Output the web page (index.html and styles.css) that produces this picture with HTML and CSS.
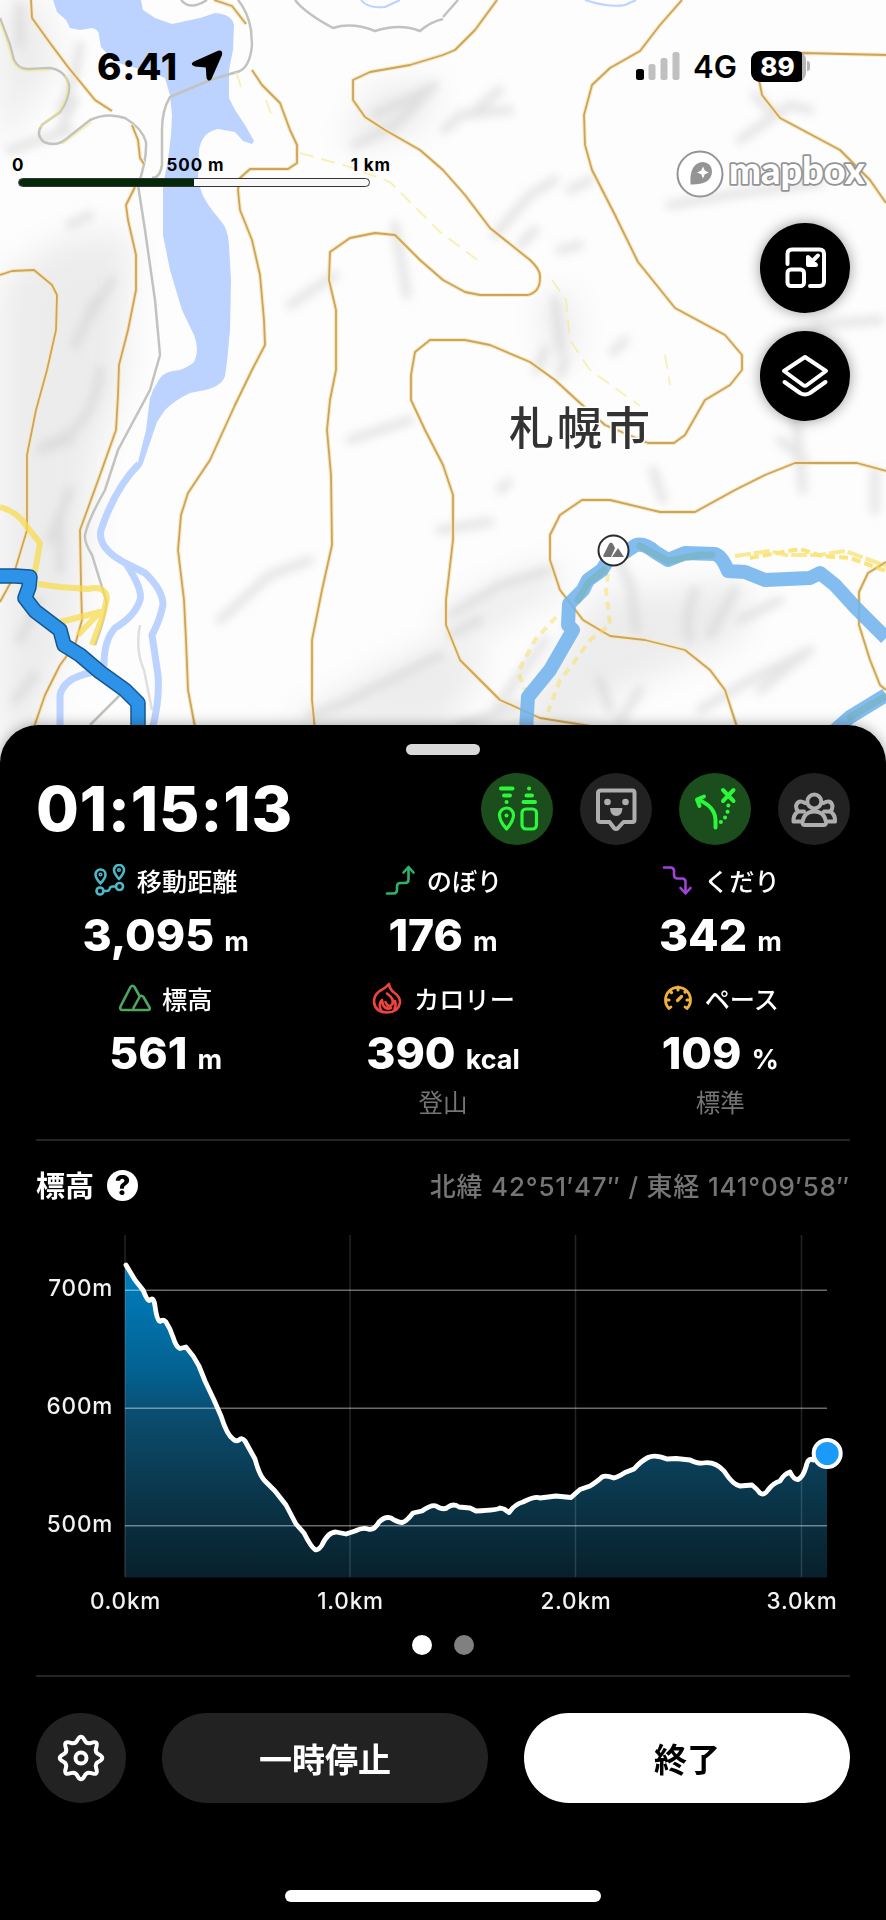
FILE: index.html
```html
<!DOCTYPE html>
<html lang="ja">
<head>
  <meta charset="UTF-8">
  <meta name="viewport" content="width=device-width, initial-scale=1.0">
  <title>活動記録</title>
  <link rel="stylesheet" href="styles.css">
</head>
<body>
  <div class="app">
    <div class="map">
      <svg class="map-canvas" viewBox="0 0 886 800">
        <defs>
          <filter id="soft" x="-20%" y="-20%" width="140%" height="140%"><feGaussianBlur stdDeviation="5"/></filter>
          <filter id="wide" x="-20%" y="-20%" width="140%" height="140%"><feGaussianBlur stdDeviation="16"/></filter>
        </defs>
        <rect width="886" height="800" fill="#fdfdfd"/>

        <!-- 陰影 -->
        <g filter="url(#wide)" fill="#ececec">
          <path d="M0 0H40L60 60 0 150Z"/>
          <path d="M0 280L60 240 130 230 125 380 95 460 80 620 30 740H0Z"/>
          <path d="M370 90L440 80 420 130 340 150Z"/>
          <path d="M540 300l30-10 10 60-30 20Z"/>
          <path d="M600 590l60 0 90-10-10 60-120 50-60 50-50-10Z"/>
          <path d="M443 610l110-50 10 30-110 60Z"/>
          <path d="M280 725l150-80 60 10-40 70Z"/>
        </g>
        <g filter="url(#soft)" fill="none" stroke="#d0d0d0" stroke-width="9" stroke-linecap="round" opacity=".55">
          <path d="M80 45q-5 40-20 65M70 130l-60 20M20 5v40M75 100l-15 30"/>
          <path d="M112 280l-30 50M100 370q-5 60-55 75M70 490l-20 50M95 300l-20 45M40 450l30-10M60 520v50M20 640l20-40M15 700l20-25"/>
          <path d="M355 145l40-20 40-40M375 115l60-30M395 225l12 70M290 305l45-30M70 225l20-10"/>
          <path d="M445 130l15-15 50-5M495 235l35-40 25-15M520 245l15-15M570 190l20-10M670 205l70-12 80-10M560 250l20-5"/>
          <path d="M555 300l6 50M545 350l-8 20M560 375l5-15M625 340l-12 12M653 470l10 30M795 410l8 80M780 440l25 20M875 470v40"/>
          <path d="M740 140l50-35 20 5M755 95l15 15M815 325l65-5M500 90l-30 25"/>
          <path d="M450 615l50-30 50-15M450 635l30-15M340 705l50-25 50-25M310 715l30-10M220 620l50-45 40-15M440 530l50-8M350 440l60-20M500 490l8-8"/>
          <path d="M630 580l6 50M695 590q-12 30-5 50M735 590l-25 45M780 600l-40 20M620 560l6 20"/>
          <path d="M600 680l10 30M640 690l-20 30M700 710l50-30 60-30M545 640l-50 70M460 725l60-20M760 690l50-40"/>
        </g>

        <!-- 水域 -->
        <path fill="#bcd2ff" d="M53 0L57 12 66 20 70 28 80 30 92 28Q99 29 99 36L101 47 115 62 150 72 165 78 170 95 172 115 171 135 168 160 163 185V235L170 270 182 310 194 335Q200 350 194 362 190 366 180 370 165 371 160 378L153 390 150 398 146 430 138 462 136 468 142 466 157 422 165 410Q175 400 190 393L205 390Q222 386 225 376L227 362 230 330 231 280 229 245Q228 228 220 220L212 210Q200 195 198 178L199 150Q202 132 218 129L235 132 243 141 252 144 254 141 245 125 235 110 229 98V70L233 50 234 25Q232 14 215 13L200 18 172 24 155 18 143 10 141 0Z"/>
        <g fill="none" stroke="#bcd2ff" stroke-width="7" stroke-linejoin="round">
          <path d="M139 464Q115 488 101 530 97 548 125 563L145 573Q163 590 163 605 160 620 152 635L158 675Q160 700 152 730" />
          <path d="M127 565Q143 590 140 600 135 616 115 628 104 640 104 665L90 673Q64 678 60 695V730"/>
          <path d="M361 0Q368 9 385 7L400 0M585 0Q610 8 625 5L636 0" stroke-width="2"/>
        </g>

        <!-- 道路 -->
        <g class="road">
          <path d="M0 18L10 45 14 60Q18 69 28 69L50 68Q65 70 69 85 70 98 60 112L42 125Q35 135 44 142 58 148 70 136L90 120Q107 112 125 118 142 128 146 142 147 160 138 185L145 230 155 300 160 355 150 390 118 450 105 490Q88 520 85 535 84 542 92 555L106 600Q108 610 95 645"/>
          <path d="M238 0Q248 12 251 30L252 45Q250 66 240 71L210 80 170 97Q162 110 162 130V165Q160 178 152 178"/>
          <path d="M181 0Q190 11 207 0M295 0Q305 13 333 28 352 22 375 31 400 23 420 31 430 22 443 19M443 17L458 0"/>
          <path d="M120 695L90 725"/>
          <path d="M140 625q-5 25 4 45l8 40" opacity=".5"/>
        </g>
        <g fill="none" stroke="#f4e98e" stroke-width="2" opacity=".6">
          <path d="M0 22L8 45 12 60Q18 71 28 71L50 70M65 76q7 14-6 36L40 127M62 144L92 122"/>
          <path d="M236 72l5 15M266 100l5 14" />
          <path d="M300 153l50 14 40 15 50 50 40 30M552 280l14 20 4 40 20 30 50 36M665 355l5 30" stroke-dasharray="14 8"/>
        </g>

        <!-- 等高線 -->
        <g class="contour contour-halo">
          <path id="c1" d="M31 0L32 18 50 43 68 67 95 100 112 111M132 125L138 140 140 158 144 164M135 187L126 205 128 220 136 255V290L128 330 119 365 118 395 116 430 100 475 80 530 81 585 82 620 75 645 60 665 45 695 33 730"/>
          <path id="c2" d="M0 275L12 271 34 270 52 285 57 295 56 330 47 370 36 410 27 455V530L18 560 12 580 0 602M214 0L232 6 246 24"/>
          <path id="c3" d="M252 70L262 85 280 103 290 130 297 145V163L288 169H250L240 178 238 190 240 210 252 240 260 275 264 320 265 345 252 370 235 405 210 460 188 493 181 515 178 550 184 600 186 640 188 690 194 722 196 730"/>
          <path id="c4" d="M497 0L475 30 455 50 443 55 410 65 370 72 353 80V100L365 117 385 130 420 150 443 170 465 195 490 228 530 260Q541 270 540 278 540 292 528 295H480L465 292 443 280 420 260 395 235 375 233 350 238 330 252 329 280 336 310V370L330 400 327 430 331 475 332 545 322 590 312 640V700L315 730"/>
          <path id="c5" d="M682 0L660 25 640 51 610 68 592 85 584 115 585 145 592 170 615 215 638 262 675 308 725 335 742 355V370L730 385 705 400 685 435 674 443H648L605 425 580 403 555 380 530 362 490 345 465 340H430L415 352 411 375V400L425 430 443 465 453 495V540L446 600V625L460 660 500 700 540 718 590 726"/>
          <path id="c6" d="M886 55L803 53 762 58 758 75 762 95 780 118 840 150 870 180 886 203M886 471L857 463H795L765 475 735 490 695 512H660L610 500H582L560 515 550 535V560L560 590 583 620 610 636 645 640 685 650 710 670 725 690 738 730"/>
          <path id="c7" d="M886 562L868 573 859 592V625L870 660 880 685 886 690"/>
        </g>
        <g class="contour">
          <use href="#c1"/><use href="#c2"/><use href="#c3"/><use href="#c4"/><use href="#c5"/><use href="#c6"/><use href="#c7"/>
        </g>

        <!-- みんなの軌跡 -->
        <g fill="none" stroke="#f7dc50" stroke-width="6" opacity=".75" stroke-linejoin="round">
          <path d="M0 507Q18 512 27 527L40 543 35 572M38 584L60 587 88 589Q105 585 107 598L103 615 92 645M60 622L100 612 78 635"/>
          <path d="M735 556L770 551 786 555 820 555 845 551 886 566" stroke-width="4" stroke-dasharray="16 3" opacity=".8"/>
          <path d="M750 558L800 549 822 556 850 558 886 571" stroke-width="4" stroke-dasharray="9 4"/>
          <path d="M610 560L606 590 610 625 590 640 572 665 560 680 548 712M556 617L535 640 518 672 525 690" stroke-width="4" stroke-dasharray="8 6" opacity=".6"/>
        </g>

        <!-- 予定ルート -->
        <g class="plan">
          <path d="M613 560L636 545Q645 543 655 552L668 560 685 553 715 554Q722 556 728 571L745 572 765 580 810 578 820 573 835 585 855 607 886 638"/>
          <path d="M608 560L602 570 588 580 583 590 569 604 568 625 573 630 550 670 528 697 526 730"/>
          <path d="M833 732L850 717 886 695"/>
        </g>
        <path d="M640 546L668 561 700 555 712 555M604 570L588 583 578 600M850 717L886 696" fill="none" stroke="#6aa88e" stroke-width="7" opacity=".35" stroke-linecap="round"/>

        <!-- 歩いた軌跡 -->
        <path class="track-edge" d="M-5 576L15 576 30 577 29 587 25 598 35 611 60 630 64 645 80 655 100 672 125 690 138 703V740"/>
        <path class="track" d="M-5 576L15 576 30 577 29 587 25 598 35 611 60 630 64 645 80 655 100 672 125 690 138 703V740"/>

        <g>
          <circle cx="613.500" cy="550.500" r="15" fill="#fff" stroke="#2b2b2b" stroke-width="2"/>
          <path d="M603 556L609 544Q611 541 613 544L615 548 611 557H604ZM612 557L618 548 624 557Z" fill="#707070"/>
        </g>
        <text class="city" x="509" y="445" textLength="141">札幌市</text>
      </svg>

      <div class="status">
        <span class="clock">6:41</span>
        <svg class="locate" width="32" height="32" viewBox="0 0 32 32"><path d="M3 11.500L27 .8Q32-.5 31 5L20.500 29Q17.500 33 15.500 28L14.800 17.500 4 16.500Q-2 14.500 3 11.500Z"/></svg>
        <svg class="signal" width="45" height="30" viewBox="0 0 45 30">
          <rect x="0" y="18" width="8" height="11" rx="2.500"/>
          <g fill="#c0c0c0"><rect x="12.500" y="13" width="7" height="16" rx="2.500"/><rect x="24.500" y="7" width="7" height="22" rx="2.500"/><rect x="36.500" y="1" width="7" height="28" rx="2.500"/></g>
        </svg>
        <span class="net">4G</span>
        <span class="battery"><span class="level">89</span><span class="nub"></span></span>
      </div>

      <div class="scale">
        <div class="scale-labels"><span>0</span><span>500 m</span><span>1 km</span></div>
        <div class="scale-bar"><div class="scale-fill"></div></div>
      </div>

      <svg class="mapbox" width="200" height="50" viewBox="0 0 200 50">
        <circle cx="25" cy="25" r="22.500" fill="#fff" stroke="#949494" stroke-width="2"/>
        <path d="M15.500 35.500Q14 14 28 13 37 14 37 23 36 36 15.500 35.500Z" fill="#949494"/>
        <path d="M28 17.500l1.800 4 4.200 1.900-4.200 1.900L28 29.500l-1.800-4.200-4.200-1.900 4.200-1.900Z" fill="#fff"/>
        <text x="54" y="34.500" textLength="136" lengthAdjust="spacingAndGlyphs">mapbox</text>
      </svg>

      <div class="map-buttons">
        <button class="map-btn">
          <svg width="90" height="90" viewBox="0 0 90 90">
            <path d="M27.500 41V31q0-4.500 4.500-4.500H59.500q4.500 0 4.500 4.500V58.500q0 4.500-4.500 4.500H50"/>
            <rect x="27.500" y="46.500" width="16.500" height="16.500" rx="3.500"/>
            <path d="M58 32.500L49 41.500M48 34V42H56Z"/>
          </svg>
        </button>
        <button class="map-btn">
          <svg width="90" height="90" viewBox="0 0 90 90">
            <path d="M45 26L66 40 47 54Q45 55.500 43 54L24 40Z"/>
            <path d="M24.500 51L40 62Q45 65 50 62L65.500 51"/>
          </svg>
        </button>
      </div>
    </div>

    <div class="panel">
      <div class="handle"></div>

      <div class="head">
        <div class="timer">01:15:13</div>
        <div class="tools">
          <div class="tool on">
            <svg width="72" height="72" viewBox="0 0 72 72">
              <path d="M20 15.500H31.500M23 22.500H29M25.500 29h.1M48 15.500h.1M45.500 22.500H51M42.500 29H54"/>
              <path d="M25.500 56Q18.500 48 18.500 42A7 7 0 0 1 32.500 42Q32.500 48 25.500 56Z" stroke-width="3.200"/>
              <rect x="41" y="36" width="14.500" height="20" rx="4" stroke-width="3.200"/>
              <circle cx="25.500" cy="42.500" r="2" class="solid"/>
            </svg>
          </div>
          <div class="tool">
            <svg width="72" height="72" viewBox="0 0 72 72">
              <path d="M21 17.500H52.500Q54.500 17.500 54.500 20V46.500Q54.500 49 52.500 49H43.500L38 55Q36 57 34 55L29.500 49H21Q18 49 18 46.500V20Q18 17.500 21 17.500Z"/>
              <circle cx="27.500" cy="29" r="3.300" class="solid"/><circle cx="45.500" cy="29" r="3.300" class="solid"/>
              <path d="M30 35H42.500Q42 43 36.300 43 30.500 43 30 35Z" class="solid"/>
            </svg>
          </div>
          <div class="tool on">
            <svg width="72" height="72" viewBox="0 0 72 72">
              <path d="M36.500 54.500V47Q36 33 18.500 26.500M25 23.500L18 26.500 20.500 33M44 17L54.500 28M54.500 17L44 28"/>
              <path d="M41.800 49h.1M46 44.500h.1M48.500 38.800h.1M49.300 32.500h.1"/>
            </svg>
          </div>
          <div class="tool">
            <svg width="72" height="72" viewBox="0 0 72 72">
              <circle cx="36.300" cy="28.500" r="7"/>
              <path d="M27 30Q20 26 18 33 18 36 20 38.500 15 42 15.500 48.500H22.500M45.500 30Q53 26 54.500 33 54.500 36 52.500 38.500 57.500 42 57 48.500H50"/>
              <path d="M26.500 52H46Q48.500 52 48 48.500 46 38.500 36.300 38.500 26.500 38.500 24.500 48.500 24 52 26.500 52Z"/>
              <path d="M20.500 38.500H26M52 38.500H46"/>
            </svg>
          </div>
        </div>
      </div>

      <div class="stats">
        <div class="stat">
          <div class="label">
            <svg class="icon cyan" viewBox="0 0 32 32"><path d="M6.500 19.500Q1.500 14 1.500 10.500A5 5 0 0 1 11.500 10.500Q11.500 14 6.500 19.500ZM25 15Q20 9.500 20 6A5 5 0 0 1 30 6Q30 9.500 25 15Z"/><circle cx="6.500" cy="10.500" r=".8"/><circle cx="25" cy="6" r=".8"/><circle cx="6" cy="27" r="3.500"/><circle cx="25.500" cy="22.500" r="3.500"/><path d="M9.500 27H12.500Q15 27 15.500 25 16 22.500 19 22.500H22"/></svg>
            移動距離
          </div>
          <div class="value">3,095<span>m</span></div>
        </div>
        <div class="stat">
          <div class="label">
            <svg class="icon green" viewBox="0 0 32 32"><path d="M3 29.500H9.500Q13 29.500 13 26V22.500Q13 19 16.500 19H21Q24.500 19 24.500 15.500V3.500M19.500 8.500L24.500 3 29.500 8.500"/></svg>
            のぼり
          </div>
          <div class="value">176<span>m</span></div>
        </div>
        <div class="stat">
          <div class="label">
            <svg class="icon purple" viewBox="0 0 32 32"><path d="M3 3.500H9.500Q13 3.500 13 7V11Q13 14.500 16.500 14.500H21Q24.500 14.500 24.500 18V29M19.500 24L24.500 29.500 29.500 24"/></svg>
            くだり
          </div>
          <div class="value">342<span>m</span></div>
        </div>
        <div class="stat">
          <div class="label">
            <svg class="icon leaf" viewBox="0 0 32 32"><path d="M3.500 28H29Q31.500 28 30.500 25.500L24.500 15Q22.500 12.500 20.500 15L14.500 26M20.500 14L15.500 5Q13.500 2.500 11.500 5L1.500 24.500Q.500 28 3.500 28"/></svg>
            標高
          </div>
          <div class="value">561<span>m</span></div>
        </div>
        <div class="stat">
          <div class="label">
            <svg class="icon red" viewBox="0 0 32 32"><path d="M18 2Q18.500 7 23 10.500 29.500 15 29 21 27 30.500 16 30.500 4 30 3 20 3 13.500 8 9.500 14 6.500 18 2Z"/><path d="M16 11.500Q23.500 17 21.500 22 18.500 26 15.500 22L14.500 20M10 28Q7 22 11 18L12 23Q15 28 20 26M23.500 27Q25.500 23.500 24 19"/></svg>
            カロリー
          </div>
          <div class="value">390<span>kcal</span></div>
          <div class="sub">登山</div>
        </div>
        <div class="stat">
          <div class="label">
            <svg class="icon amber" viewBox="0 0 32 32"><path d="M7 26.500A12.500 12.500 0 1 1 25 26.500M7 26.500L9 25M25 26.500L23 25" stroke-width="2.800"/><path d="M16 5V8M8 9L9.500 10.500M24 9L23 10M4.500 18H7M27.500 18H25M15.500 18.500L19.500 14.500" stroke-width="3.200"/></svg>
            ペース
          </div>
          <div class="value">109<span>%</span></div>
          <div class="sub">標準</div>
        </div>
      </div>

      <div class="chart-head">
        <h2>標高</h2>
        <span class="help">?</span>
        <span class="coords">北緯 42°51′47″ / 東経 141°09′58″</span>
      </div>

      <svg class="chart" width="814" height="400" viewBox="36 1225 814 400">
        <defs>
          <linearGradient id="fill" x1="0" y1="1264" x2="0" y2="1577" gradientUnits="userSpaceOnUse">
            <stop offset="0" stop-color="#0080c2"/>
            <stop offset=".35" stop-color="#03618f"/>
            <stop offset=".5" stop-color="#0b4b6c"/>
            <stop offset=".75" stop-color="#0a3549"/>
            <stop offset="1" stop-color="#08202c"/>
          </linearGradient>
        </defs>
        <path fill="url(#fill)" d="M125 1264L135 1280 144 1291 149 1300 153 1299 158 1321 164 1320 170 1330 177 1347 186 1347 196 1361 205 1382 215 1402 222 1418 230 1434 237 1440 242 1439 253 1457 262 1477 275 1492 287 1506 296 1524 303 1532 311 1546 316 1550 321 1546 328 1535 336 1532 346 1534 364 1527 372 1529 380 1521 388 1517 402 1522 413 1512 422 1511 433 1505 443 1509 455 1505 476 1511 499 1508 509 1512 519 1503 536 1497 555 1496 571 1497 580 1489 590 1486 605 1476 614 1478 625 1472 635 1467 645 1459 655 1456 667 1459 690 1460 713 1464 722 1470 730 1480 739 1486 752 1485 763 1494 774 1483 780 1481 789 1472 796 1479 803 1473 809 1459 827 1453V1577.500H125Z"/>
        <g class="grid-x"><path d="M125 1235V1577M350 1235V1577M575.500 1235V1577M801.500 1235V1577"/></g>
        <g class="grid-y"><path d="M125 1290.300H827M125 1408.200H827M125 1525.700H827"/></g>
        <path class="line" d="M126 1265L135 1280 143 1290Q147 1300 149 1300.500L152 1299Q154 1299 155 1306 157 1321 160 1321.500 163 1319 166 1322 170 1328 173 1337 176 1347 180 1348.500L186 1347Q194 1356 199 1366L205 1381 214 1400 221 1416Q227 1435 233 1439 236 1442 239 1440 242 1437 245 1441L255 1459Q259 1474 264 1480L275 1491 286 1505 296 1524 304 1533Q311 1547 315 1549.500 318 1551 322 1545 328 1532 336 1532L346 1534 355 1531Q363 1527 368 1529 374 1531 379 1522 385 1516 391 1518 397 1522 402 1522.500 406 1522 413 1513L422 1511Q432 1504 436 1506 444 1511 448 1507 454 1503 459 1507L470 1508 476 1511Q498 1510 500 1508L504 1509 509 1512.500Q515 1504 523 1502 535 1496 540 1498L556 1496 571 1497.500Q576 1493 580 1489.500L590 1486Q598 1481 602 1477 606 1475 614 1478 618 1477 625 1472.500L634 1469Q641 1461 648 1457.500 655 1454 667 1459L676 1458.500 690 1460Q698 1464 703 1463 715 1461 724 1471 733 1485 740 1486L752 1485Q757 1489 760 1493 764 1496 768 1490 773 1483 780 1481 784 1474 790 1472 794 1480 798 1479.500 803 1477 806 1467 808 1457 813 1460L827 1453"/>
        <circle cx="827.200" cy="1453.500" r="13.500" fill="#1a9bfa" stroke="#fff" stroke-width="4"/>
        <g class="axis" text-anchor="end">
          <text x="113" y="1295.500">700m</text><text x="113" y="1413.500">600m</text><text x="113" y="1531.500">500m</text>
        </g>
        <g class="axis" text-anchor="middle">
          <text x="125.500" y="1609">0.0km</text><text x="350.500" y="1609">1.0km</text><text x="576" y="1609">2.0km</text><text x="802" y="1609">3.0km</text>
        </g>
      </svg>

      <div class="dots"><span class="dot active"></span><span class="dot"></span></div>

      <div class="actions">
        <button class="settings">
          <svg width="48" height="48" viewBox="-24 -24 48 48">
            <path d="M-3.500-18Q0-24.500 3.500-18 5.500-13.500 10.250-15.200 17.700-17.700 15.200-10.250 13.500-5.500 18-3.500 24.500 0 18 3.500 13.500 5.500 15.200 10.250 17.700 17.700 10.250 15.200 5.500 13.500 3.500 18 0 24.500-3.500 18-5.500 13.500-10.250 15.200-17.700 17.700-15.200 10.250-13.500 5.500-18 3.500-24.500 0-18-3.500-13.500-5.500-15.200-10.250-17.700-17.700-10.250-15.200-5.500-13.500-3.500-18Z"/>
            <circle r="5.500"/>
          </svg>
        </button>
        <button class="pause">一時停止</button>
        <button class="finish">終了</button>
      </div>

      <div class="home"></div>
    </div>
  </div>
</body>
</html>
```
FILE: styles.css
```css
*{
  box-sizing: border-box;
}
body{
  margin: 0;
  background: #000;
  font-family: Inter, "Noto Sans CJK JP", sans-serif;
  color: #fff;
}
button{
  border: none;
  padding: 0;
  font-family: inherit;
}
.app{
  width: 886px;
  height: 1920px;
  overflow: hidden;
}

/* 地図 */
.map{
  position: relative;
  height: 725px;
}
.map-canvas{
  position: absolute;
  left: 0;
  top: 0;
  width: 886px;
  height: 800px;
}
.contour{
  fill: none;
  stroke: #cda45c;
  stroke-width: 1.8;
  stroke-linejoin: round;
}
.contour-halo{
  stroke: #f7e8c0;
  stroke-width: 4;
}
.road path{
  fill: none;
  stroke: #c2c2be;
  stroke-width: 2.5;
}
.plan path{
  fill: none;
  stroke: #72b4ee;
  stroke-width: 14;
  stroke-linejoin: round;
  opacity: .88;
}
.track-edge{
  fill: none;
  stroke: #17578f;
  stroke-width: 15.500;
  stroke-linejoin: round;
}
.track{
  fill: none;
  stroke: #2d93e8;
  stroke-width: 12.500;
  stroke-linejoin: round;
}
.city{
  font-family: "Noto Sans CJK JP", sans-serif;
  font-size: 45px;
  font-weight: 500;
  fill: #333;
  stroke: #fff;
  stroke-width: 3;
  paint-order: stroke;
}

/* ステータスバー */
.status{
  position: absolute;
  left: 0;
  right: 0;
  top: 46px;
  height: 40px;
  padding: 0 76px 0 97px;
  display: flex;
  align-items: center;
  color: #000;
}
.clock{
  width: 94px;
  font-size: 37px;
  font-weight: 800;
  letter-spacing: .8px;
}
.signal{
  margin-left: auto;
}
.net{
  margin-left: 12px;
  width: 58px;
  font-size: 31px;
  font-weight: 600;
}
.battery{
  width: 59px;
  display: flex;
  align-items: center;
  gap: 1px;
}
.level{
  width: 55px;
  height: 31px;
  border-radius: 9px;
  background: linear-gradient(90deg, #000 51px, #b5b5b5 51px);
  color: #fff;
  font-size: 26px;
  font-weight: 800;
  line-height: 31px;
  text-align: center;
  padding-right: 2px;
}
.nub{
  width: 3px;
  height: 10px;
  border-radius: 0 3px 3px 0;
  background: #b5b5b5;
}

.scale{
  position: absolute;
  left: 18px;
  top: 154px;
  width: 352px;
  color: #000;
}
.scale-labels{
  display: flex;
  justify-content: space-between;
  margin: 0 -21px 0 -6px;
  height: 24px;
  font-size: 17px;
  font-weight: 700;
  line-height: 22px;
  letter-spacing: .9px;
}
.scale-labels span:nth-child(2){
  margin-left: 16px;
}
.scale-bar{
  height: 9px;
  border: 1px solid #333;
  border-radius: 5px;
  background: #f8f8f8;
  overflow: hidden;
}
.scale-fill{
  width: 50%;
  height: 100%;
  background: #05280a;
}
.mapbox{
  position: absolute;
  left: 675px;
  top: 149px;
  overflow: visible;
}
.mapbox text{
  font-family: Lato, sans-serif;
  font-size: 37px;
  font-weight: 900;
  fill: #fff;
  stroke: #949494;
  stroke-width: 3.500;
  stroke-linejoin: round;
  paint-order: stroke;
}
.map-buttons{
  position: absolute;
  right: 36px;
  top: 223px;
  display: flex;
  flex-direction: column;
  gap: 18px;
}
.map-btn{
  width: 90px;
  height: 90px;
  border-radius: 50%;
  background: #000;
  box-shadow: 0 0 14px rgba(0,0,0,.4);
}
.map-btn svg{
  display: block;
  fill: none;
  stroke: #fff;
  stroke-width: 4;
  stroke-linecap: round;
  stroke-linejoin: round;
}

/* パネル */
.panel{
  position: relative;
  height: 1195px;
  padding: 19px 36px 0;
  border-radius: 38px 38px 0 0;
  background: #000;
  box-shadow: 0 0 14px rgba(0,0,0,.35);
}
.handle{
  width: 74px;
  height: 11px;
  margin: 0 auto;
  border-radius: 6px;
  background: #d9d9d9;
}
.head{
  display: flex;
  justify-content: space-between;
  align-items: center;
  height: 72px;
  margin-top: 18px;
}
.timer{
  font-size: 62px;
  font-weight: 800;
  line-height: 72px;
  letter-spacing: .9px;
}
.tools{
  display: flex;
  gap: 27px;
}
.tool{
  width: 72px;
  height: 72px;
  border-radius: 50%;
  background: #222;
  color: #aeaeae;
}
.tool.on{
  background: #1b4d1d;
  color: #2bf83b;
}
.tool svg{
  display: block;
  fill: none;
  stroke: currentColor;
  stroke-width: 4;
  stroke-linecap: round;
  stroke-linejoin: round;
}
.tool .solid{
  fill: currentColor;
  stroke: none;
}

.stats{
  display: grid;
  grid-template-columns: repeat(3, 1fr);
  align-content: start;
  row-gap: 20px;
  height: 277px;
  margin: 17px -9px 0;
}
.stat{
  text-align: center;
}
.label{
  display: flex;
  justify-content: center;
  align-items: center;
  gap: 11px;
  height: 36px;
  font-size: 25.200px;
  font-weight: 500;
}
.icon{
  width: 32px;
  height: 32px;
  fill: none;
  stroke: currentColor;
  stroke-width: 2.600;
  stroke-linecap: round;
  stroke-linejoin: round;
}
.cyan{ color: #4cb8c8; }
.green{ color: #2fb36a; }
.purple{ color: #a142d8; }
.leaf{ color: #4fa75b; }
.red{ color: #ef4340; }
.amber{ color: #efb140; }
.value{
  display: flex;
  justify-content: center;
  align-items: baseline;
  gap: 10px;
  height: 50px;
  margin-top: 12px;
  font-size: 44.500px;
  font-weight: 800;
  line-height: 50px;
}
.value span{
  font-size: 27px;
  font-weight: 700;
}
.sub{
  height: 36px;
  margin-top: 7px;
  font-size: 24.500px;
  line-height: 36px;
  color: #757575;
}

.chart-head{
  display: flex;
  align-items: center;
  height: 66px;
  padding-top: 25px;
  border-top: 2px solid #242424;
}
.chart-head h2{
  margin: -3px 0 0;
  font-size: 29px;
  font-weight: 700;
}
.help{
  width: 31px;
  height: 31px;
  margin-left: 13px;
  border-radius: 50%;
  background: #fff;
  color: #000;
  font-size: 27px;
  font-weight: 800;
  line-height: 32px;
  text-align: center;
}
.coords{
  margin: -2px 0 0 auto;
  font-size: 26px;
  font-weight: 500;
  color: #757575;
  letter-spacing: .8px;
}
.chart{
  display: block;
  margin-top: 20px;
  overflow: visible;
}
.grid-x{
  stroke: rgba(255,255,255,.14);
  stroke-width: 1.500;
}
.grid-y{
  stroke: rgba(255,255,255,.42);
  stroke-width: 1.600;
}
.line{
  fill: none;
  stroke: #fff;
  stroke-width: 4.800;
  stroke-linejoin: round;
  stroke-linecap: round;
}
.axis{
  fill: #f2f2f2;
  font-size: 22.500px;
  font-weight: 500;
  letter-spacing: .8px;
}
.dots{
  display: flex;
  justify-content: center;
  gap: 22px;
  height: 52px;
  padding-top: 10px;
  border-bottom: 2px solid #242424;
}
.dot{
  width: 20px;
  height: 20px;
  border-radius: 50%;
  background: #808080;
}
.dot.active{
  background: #fff;
}
.actions{
  display: flex;
  gap: 36px;
  margin-top: 36px;
}
.actions button{
  flex: 1;
  height: 90px;
  border-radius: 45px;
  background: #222;
  color: #fff;
  font-size: 33px;
  font-weight: 700;
}
.actions .settings{
  flex: 0 0 90px;
}
.settings svg{
  display: block;
  margin: 0 auto;
  fill: none;
  stroke: #fff;
  stroke-width: 4;
  stroke-linejoin: round;
}
.actions .finish{
  background: #fff;
  color: #000;
}
.home{
  width: 316px;
  height: 12px;
  margin: 87px auto 0;
  border-radius: 6px;
  background: #fff;
}
```
